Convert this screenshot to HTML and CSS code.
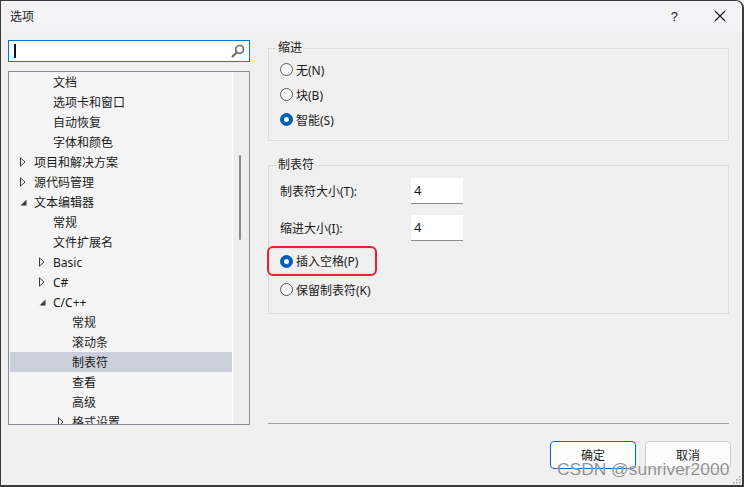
FILE: index.html
```html
<!DOCTYPE html>
<html lang="zh-CN">
  <head>
    <meta charset="UTF-8" />
    <title>选项</title>
    <link rel="stylesheet" href="styles.css">
  </head>
  <body>
    <div class="window">
      <div class="titlebar">
        <span class="title">选项</span>
        <span class="help">?</span>
        <svg class="close" width="12" height="12" viewBox="0 0 12 12">
          <path d="M1 1 L11 11 M11 1 L1 11" stroke="#1a1a1a" stroke-width="1.1" fill="none" />
        </svg>
      </div>

      <div class="main">
        <div class="left">
          <div class="search">
            <span class="caret"></span>
            <svg class="glass" width="14" height="14" viewBox="0 0 14 14">
              <circle cx="8.6" cy="5.4" r="3.9" stroke="#6e6e6e" stroke-width="1.7" fill="none" />
              <path d="M5.8 8.2 L1.6 12.4" stroke="#6e6e6e" stroke-width="2.2" stroke-linecap="round" />
            </svg>
          </div>

          <div class="tree">
            <div class="list">
              <div class="row l2"><span class="tw"></span>文档</div>
              <div class="row l2"><span class="tw"></span>选项卡和窗口</div>
              <div class="row l2"><span class="tw"></span>自动恢复</div>
              <div class="row l2"><span class="tw"></span>字体和颜色</div>
              <div class="row l1"><span class="tw"><svg width="6" height="10" viewBox="0 0 6 10"><path d="M0.5 0.8 L5 5 L0.5 9.2 Z" stroke="#3a3a3a" fill="none" /></svg></span>项目和解决方案</div>
              <div class="row l1"><span class="tw"><svg width="6" height="10" viewBox="0 0 6 10"><path d="M0.5 0.8 L5 5 L0.5 9.2 Z" stroke="#3a3a3a" fill="none" /></svg></span>源代码管理</div>
              <div class="row l1"><span class="tw"><svg width="7" height="7" viewBox="0 0 7 7"><path d="M6.5 0.5 L6.5 6.5 L0.5 6.5 Z" fill="#3a3a3a" /></svg></span>文本编辑器</div>
              <div class="row l2"><span class="tw"></span>常规</div>
              <div class="row l2"><span class="tw"></span>文件扩展名</div>
              <div class="row l2"><span class="tw"><svg width="6" height="10" viewBox="0 0 6 10"><path d="M0.5 0.8 L5 5 L0.5 9.2 Z" stroke="#3a3a3a" fill="none" /></svg></span>Basic</div>
              <div class="row l2"><span class="tw"><svg width="6" height="10" viewBox="0 0 6 10"><path d="M0.5 0.8 L5 5 L0.5 9.2 Z" stroke="#3a3a3a" fill="none" /></svg></span>C#</div>
              <div class="row l2"><span class="tw"><svg width="7" height="7" viewBox="0 0 7 7"><path d="M6.5 0.5 L6.5 6.5 L0.5 6.5 Z" fill="#3a3a3a" /></svg></span>C/C++</div>
              <div class="row l3"><span class="tw"></span>常规</div>
              <div class="row l3"><span class="tw"></span>滚动条</div>
              <div class="row l3 selected"><span class="tw"></span>制表符</div>
              <div class="row l3"><span class="tw"></span>查看</div>
              <div class="row l3"><span class="tw"></span>高级</div>
              <div class="row l3"><span class="tw"><svg width="6" height="10" viewBox="0 0 6 10"><path d="M0.5 0.8 L5 5 L0.5 9.2 Z" stroke="#3a3a3a" fill="none" /></svg></span>格式设置</div>
            </div>
            <div class="scrollbar">
              <div class="thumb"></div>
            </div>
          </div>
        </div>

        <div class="right">
          <fieldset class="group g1">
            <legend>缩进</legend>
            <div class="opt"><span class="radio"></span>无(N)</div>
            <div class="opt"><span class="radio"></span>块(B)</div>
            <div class="opt"><span class="radio on"></span>智能(S)</div>
          </fieldset>

          <fieldset class="group g2">
            <legend>制表符</legend>
            <div class="field">
              <label>制表符大小(T):</label>
              <div class="num">4</div>
            </div>
            <div class="field second">
              <label>缩进大小(I):</label>
              <div class="num">4</div>
            </div>
            <div class="opt marked"><span class="radio on"></span>插入空格(P)</div>
            <div class="opt keep"><span class="radio"></span>保留制表符(K)</div>
          </fieldset>

          <div class="sep"></div>
        </div>
      </div>

      <div class="footer">
        <button class="btn primary">确定</button>
        <button class="btn">取消</button>
      </div>

      <div class="watermark">CSDN @sunriver2000</div>

      <svg class="grip" width="9" height="9" viewBox="0 0 9 9">
        <rect x="7" y="1" width="1.5" height="1.5" fill="#a0a0a0" />
        <rect x="4" y="4" width="1.5" height="1.5" fill="#a0a0a0" />
        <rect x="7" y="4" width="1.5" height="1.5" fill="#a0a0a0" />
        <rect x="1" y="7" width="1.5" height="1.5" fill="#a0a0a0" />
        <rect x="4" y="7" width="1.5" height="1.5" fill="#a0a0a0" />
        <rect x="7" y="7" width="1.5" height="1.5" fill="#a0a0a0" />
      </svg>
    </div>
  </body>
</html>
```

FILE: styles.css
```css
* {
  box-sizing: border-box;
}

body {
  margin: 0;
  background: #f0f0f0;
  font-family: "Noto Sans", "Noto Sans CJK SC", sans-serif;
  font-size: 12px;
  color: #1a1a1a;
}

.window {
  position: relative;
  width: 744px;
  height: 487px;
  display: flex;
  flex-direction: column;
  background: #f0f0f0;
  border: 1px solid #3a3a3a;
  border-right-width: 2px;
  border-bottom-width: 2px;
  border-top-right-radius: 8px;
  overflow: hidden;
}

.titlebar {
  height: 30px;
  flex: none;
  display: flex;
  align-items: center;
  background: #f3f3f5;
  padding-left: 9px;
}

.title {
  flex: 1;
  font-size: 12px;
}

.help {
  font-family: "Liberation Sans", sans-serif;
  font-size: 13px;
  margin-right: 36px;
}

.close {
  margin-right: 16px;
}

.main {
  display: flex;
  height: 394px;
  flex: none;
}

.left {
  width: 242px;
  margin-left: 7px;
  padding-top: 9px;
}

.search {
  height: 22px;
  display: flex;
  align-items: center;
  justify-content: space-between;
  background: #fff;
  border: 1px solid #0078d4;
  padding: 0 4px 0 5px;
}

.caret {
  width: 2px;
  height: 14px;
  background: #111;
}

.tree {
  margin-top: 9px;
  height: 354px;
  display: flex;
  border: 1px solid #868a94;
  background: #f5f5f5;
  overflow: hidden;
}

.list {
  width: 223px;
  padding-left: 1px;
}

.row {
  height: 20px;
  display: flex;
  align-items: center;
  white-space: nowrap;
}

.row.l1 {
  padding-left: 9px;
}

.row.l2 {
  padding-left: 28px;
}

.row.l3 {
  padding-left: 47px;
}

.row.selected {
  background: #cccfdb;
}

.tw {
  width: 15px;
  flex: none;
  display: flex;
  align-items: center;
  padding-left: 1px;
}

.tw svg {
  display: block;
}

.scrollbar {
  width: 17px;
  border-left: 1px solid #fff;
  background: #eeeeee;
  padding-top: 83px;
}

.thumb {
  width: 2px;
  height: 85px;
  margin-left: 6px;
  border-radius: 1px;
  background: #8a8a8a;
}

.right {
  width: 461px;
  margin-left: 18px;
  display: flex;
  flex-direction: column;
}

.group {
  margin: 0;
  border: 1px solid #dcdcdc;
  padding: 0 11px;
  min-width: 0;
}

.group legend {
  padding: 0 1px;
  margin-left: -3px;
  line-height: 14px;
}

.g1 {
  margin-top: 10px;
  padding-top: 2px;
  padding-bottom: 8px;
}

.g2 {
  margin-top: 17px;
  padding-top: 5px;
  padding-bottom: 11px;
}

.opt {
  height: 25px;
  display: flex;
  align-items: center;
  gap: 3px;
}

.radio {
  width: 13px;
  height: 13px;
  flex: none;
  border-radius: 50%;
  border: 1px solid #5c5c5c;
  background: #f7f7f7;
  display: flex;
  align-items: center;
  justify-content: center;
}

.radio.on {
  background: #005fb8;
  border-color: #005fb8;
}

.radio.on::after {
  content: "";
  width: 5px;
  height: 5px;
  border-radius: 50%;
  background: #fff;
}

.field {
  height: 27px;
  display: flex;
  align-items: center;
}

.field.second {
  margin-top: 10px;
}

.field label {
  width: 131px;
}

.num {
  width: 52px;
  height: 26px;
  background: #fff;
  border-bottom: 1px solid #8c8c8c;
  padding-left: 3px;
  display: flex;
  align-items: center;
  font-size: 13px;
}

.opt.marked {
  width: 110px;
  height: 30px;
  margin-top: 5px;
  margin-left: -13px;
  padding-left: 11px;
  border: 2px solid #e3262e;
  border-radius: 6px;
  box-shadow: inset 0 0 3px rgba(0, 0, 0, 0.12);
}

.opt.keep {
  margin-top: 1px;
}

.sep {
  margin-top: auto;
  margin-bottom: 1px;
  border-top: 1px solid #a0a0a0;
}

.footer {
  display: flex;
  justify-content: flex-end;
  gap: 9px;
  padding-top: 16px;
  padding-right: 11px;
}

.btn {
  width: 86px;
  height: 28px;
  font-family: "Noto Sans", "Noto Sans CJK SC", sans-serif;
  font-size: 12px;
  color: #1a1a1a;
  background: #fdfdfd;
  border: 1px solid #d0d0d0;
  border-radius: 4px;
  padding: 0;
}

.btn.primary {
  border-color: #0067c0;
}

.watermark {
  position: absolute;
  left: 556px;
  top: 458px;
  font-family: "Liberation Sans", sans-serif;
  font-size: 17.4px;
  color: rgba(70, 70, 70, 0.6);
  text-shadow: 0 0 1px #fff;
  white-space: nowrap;
}

.grip {
  position: absolute;
  right: 1px;
  bottom: 1px;
}
```
